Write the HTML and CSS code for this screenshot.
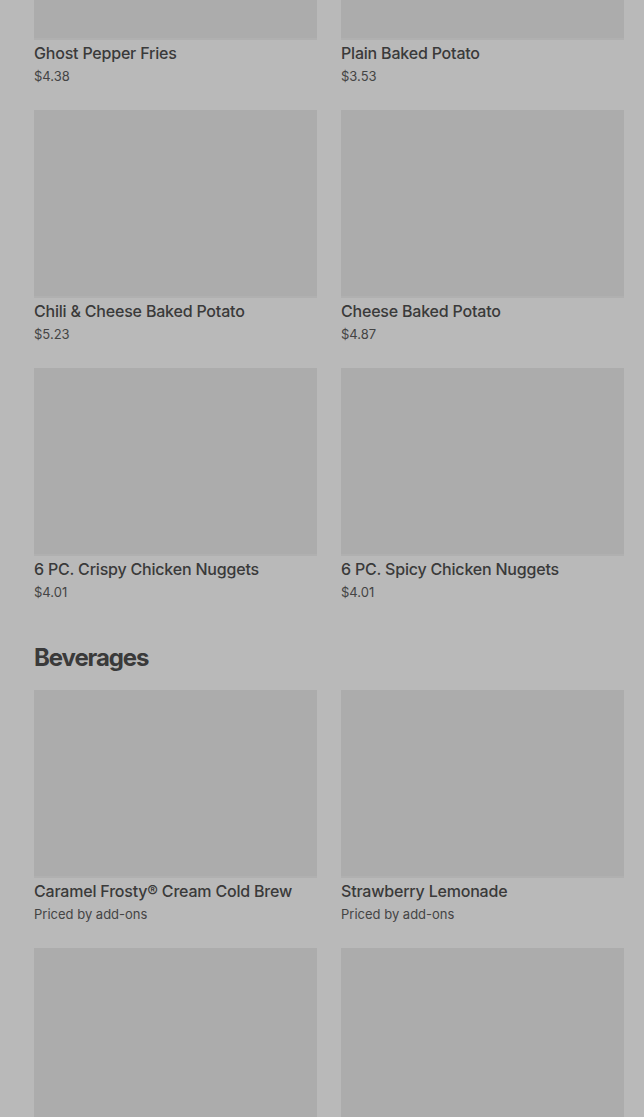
FILE: index.html
```html
<!DOCTYPE html>
<html lang="en">
<head>
<meta charset="utf-8">
<title>Menu</title>
<link rel="stylesheet" href="styles.css">
</head>
<body>
<main class="menu">
  <section class="section first">
    <div class="grid">
      <article class="item"><div class="thumb"></div><h3 class="name">Ghost Pepper Fries</h3><p class="price">$4.38</p></article>
      <article class="item"><div class="thumb"></div><h3 class="name">Plain Baked Potato</h3><p class="price">$3.53</p></article>
      <article class="item"><div class="thumb"></div><h3 class="name">Chili &amp; Cheese Baked Potato</h3><p class="price">$5.23</p></article>
      <article class="item"><div class="thumb"></div><h3 class="name">Cheese Baked Potato</h3><p class="price">$4.87</p></article>
      <article class="item"><div class="thumb"></div><h3 class="name">6 PC. Crispy Chicken Nuggets</h3><p class="price">$4.01</p></article>
      <article class="item"><div class="thumb"></div><h3 class="name">6 PC. Spicy Chicken Nuggets</h3><p class="price">$4.01</p></article>
    </div>
  </section>
  <section class="section">
    <h2 class="heading">Beverages</h2>
    <div class="grid">
      <article class="item"><div class="thumb"></div><h3 class="name">Caramel Frosty® Cream Cold Brew</h3><p class="price">Priced by add-ons</p></article>
      <article class="item"><div class="thumb"></div><h3 class="name">Strawberry Lemonade</h3><p class="price">Priced by add-ons</p></article>
      <article class="item"><div class="thumb"></div></article>
      <article class="item"><div class="thumb"></div></article>
    </div>
  </section>
</main>
</body>
</html>
```

FILE: styles.css
```css
html, body {
  margin: 0;
  padding: 0;
  background: #b9b9b9;
  overflow: hidden;
}
body {
  font-family: Inter, "Noto Sans", "Liberation Sans", sans-serif;
  color: #3b3b3b;
}
.menu {
  padding: 0 20px 0 34px;
  margin-top: -148px;
}
.section.first {
  margin-bottom: 40px;
}
.grid {
  display: grid;
  grid-template-columns: 283px 283px;
  column-gap: 24px;
  row-gap: 24px;
}
.item {
  display: flex;
  flex-direction: column;
}
.thumb {
  height: 188px;
  background: #acacac;
  box-shadow: inset 0 -2px 0 #b0b0b0;
}
.name {
  margin: 1px 0 0;
  font-size: 16px;
  line-height: 24px;
  font-weight: 500;
  letter-spacing: -0.2px;
  color: #3a3a3a;
}
.price {
  margin: 1px 0 0;
  font-size: 13px;
  line-height: 20px;
  font-weight: 400;
  color: #444;
}
.heading {
  margin: 0 0 16px;
  font-size: 24px;
  line-height: 32px;
  font-weight: 700;
  letter-spacing: -1.1px;
  color: #3a3a3a;
}
```
